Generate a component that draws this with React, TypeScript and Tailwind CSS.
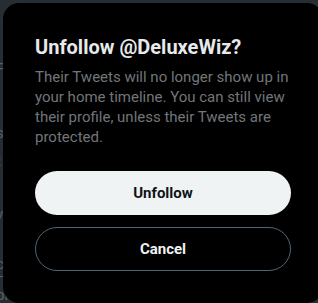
import React from 'react';

const FONT = { fontFamily: '"Segoe UI", Roboto, "Liberation Sans", sans-serif' };

// dimmed page text peeking out at the left edge behind the dialog
const behind = [
  { top: 58, text: 'F' },
  { top: 122, text: 's' },
  { top: 150, text: 't' },
  { top: 203, text: 'v' },
  { top: 253, text: 'c' },
  { top: 284, text: 'pl' },
];

export default function App() {
  return (
    <div className="relative w-[318px] h-[303px] overflow-hidden bg-[#262d33]" style={FONT}>
      <div className="absolute inset-0 text-[#56616b] text-[15px]">
        {behind.map(b => (
          <span key={b.top} className="absolute -left-[4px]" style={{ top: b.top }}>
            {b.text}
          </span>
        ))}
        <div className="absolute left-0 top-[276px] w-[3px] h-px bg-[#56616b]" />
      </div>

      <div className="relative ml-[3px] mt-[3px] w-[320px] rounded-2xl bg-black p-8">
        <h1 className="text-[20px] leading-6 font-bold text-[#e7e9ea]">Unfollow @DeluxeWiz?</h1>
        <p className="mt-2 text-[15px] leading-5 text-[#71767b]">
          Their Tweets will no longer show up in your home timeline. You can still view their
          profile, unless their Tweets are protected.
        </p>
        <div className="mt-6 flex flex-col gap-3">
          <button className="h-11 rounded-full bg-[#eff3f4] text-[15px] font-bold text-[#0f1419]">
            Unfollow
          </button>
          <button className="h-11 rounded-full border border-[#536471] text-[15px] font-bold text-[#eff3f4]">
            Cancel
          </button>
        </div>
      </div>
    </div>
  );
}
